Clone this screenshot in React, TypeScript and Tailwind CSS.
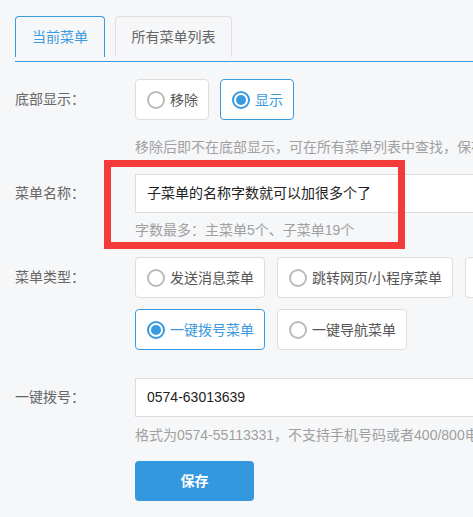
import React from "react";

const FONT = { fontFamily: '"Liberation Sans", "Noto Sans CJK SC", sans-serif' };

function Radio({ checked }: { checked: boolean }) {
  return checked ? (
    <span className="flex h-[18px] w-[18px] items-center justify-center rounded-full border-2 border-[#3a9ae0] bg-white">
      <span className="h-[10px] w-[10px] rounded-full bg-[#3a9ae0]" />
    </span>
  ) : (
    <span className="h-[18px] w-[18px] rounded-full border-2 border-[#bbbbbb] bg-white" />
  );
}

function Option({ label, checked = false }: { label: string; checked?: boolean }) {
  return (
    <div
      className={
        "flex h-[41px] items-center gap-[5px] rounded-[4px] border bg-white pl-[11px] pr-[10px] text-[14px] " +
        (checked ? "border-[#3a9ae0] text-[#3a9ae0]" : "border-[#dddddd] text-[#555555]")
      }
    >
      <Radio checked={checked} />
      <span className="leading-[20px]">{label}</span>
    </div>
  );
}

export default function App() {
  return (
    <div className="relative h-[517px] w-[473px] overflow-hidden bg-[#f6f7f9]" style={FONT}>
      <div className="w-[760px] pl-[15px] pt-[16px]">
        {/* Tabs */}
        <div className="flex gap-[10px] border-b border-[#3a9ae0] pb-[4px]">
          <div className="flex h-[41px] w-[90px] items-center justify-center rounded-t-[4px] border border-b-0 border-[#3a9ae0] text-[14px] text-[#3a9ae0]">
            当前菜单
          </div>
          <div className="flex h-[41px] w-[117px] items-center justify-center rounded-t-[4px] border border-b-0 border-[#e0e0e0] text-[14px] text-[#666666]">
            所有菜单列表
          </div>
        </div>

        {/* Row 1 */}
        <div className="mt-[17px] flex">
          <div className="flex h-[41px] w-[120px] items-center text-[14px] text-[#666666]">底部显示：</div>
          <div className="flex flex-col">
            <div className="flex gap-[11px]">
              <Option label="移除" />
              <Option label="显示" checked />
            </div>
            <div className="mt-[17px] whitespace-nowrap text-[14px] leading-[20px] text-[#a0a0a0]">
              移除后即不在底部显示，可在所有菜单列表中查找，保存后生效
            </div>
          </div>
        </div>

        {/* Row 2 */}
        <div className="mt-[17px] flex">
          <div className="flex h-[39px] w-[120px] items-center text-[14px] text-[#666666]">菜单名称：</div>
          <div className="flex flex-col">
            <div className="flex h-[39px] w-[500px] items-center border border-[#dddddd] bg-white pl-[11px] text-[14px] text-[#222222]">
              子菜单的名称字数就可以加很多个了
            </div>
            <div className="mt-[7px] whitespace-nowrap text-[14px] leading-[20px] text-[#a0a0a0]">
              字数最多：主菜单5个、子菜单19个
            </div>
          </div>
        </div>

        {/* Row 3 */}
        <div className="mt-[17px] flex">
          <div className="flex h-[41px] w-[120px] items-center text-[14px] text-[#666666]">菜单类型：</div>
          <div className="flex flex-col gap-[11px]">
            <div className="flex gap-[12px]">
              <Option label="发送消息菜单" />
              <Option label="跳转网页/小程序菜单" />
              <Option label="自定义菜单" />
            </div>
            <div className="flex gap-[12px]">
              <Option label="一键拨号菜单" checked />
              <Option label="一键导航菜单" />
            </div>
          </div>
        </div>

        {/* Row 4 */}
        <div className="mt-[28px] flex">
          <div className="flex h-[39px] w-[120px] items-center text-[14px] text-[#666666]">一键拨号：</div>
          <div className="flex flex-col">
            <div className="flex h-[39px] w-[500px] items-center border border-[#dddddd] bg-white pl-[11px] text-[14px] text-[#222222]">
              0574-63013639
            </div>
            <div className="mt-[8px] whitespace-nowrap text-[14px] leading-[20px] text-[#a0a0a0]">
              格式为0574-55113331，不支持手机号码或者400/800电话
            </div>
            <button className="mt-[16px] flex h-[40px] w-[119px] items-center justify-center rounded-[4px] bg-[#3498de] text-[14px] font-bold text-white">
              保存
            </button>
          </div>
        </div>
      </div>

      {/* Red annotation box */}
      <div className="pointer-events-none absolute left-[104px] top-[160px] h-[89px] w-[301px] border-[7px] border-[#f53a3a]" />
    </div>
  );
}
